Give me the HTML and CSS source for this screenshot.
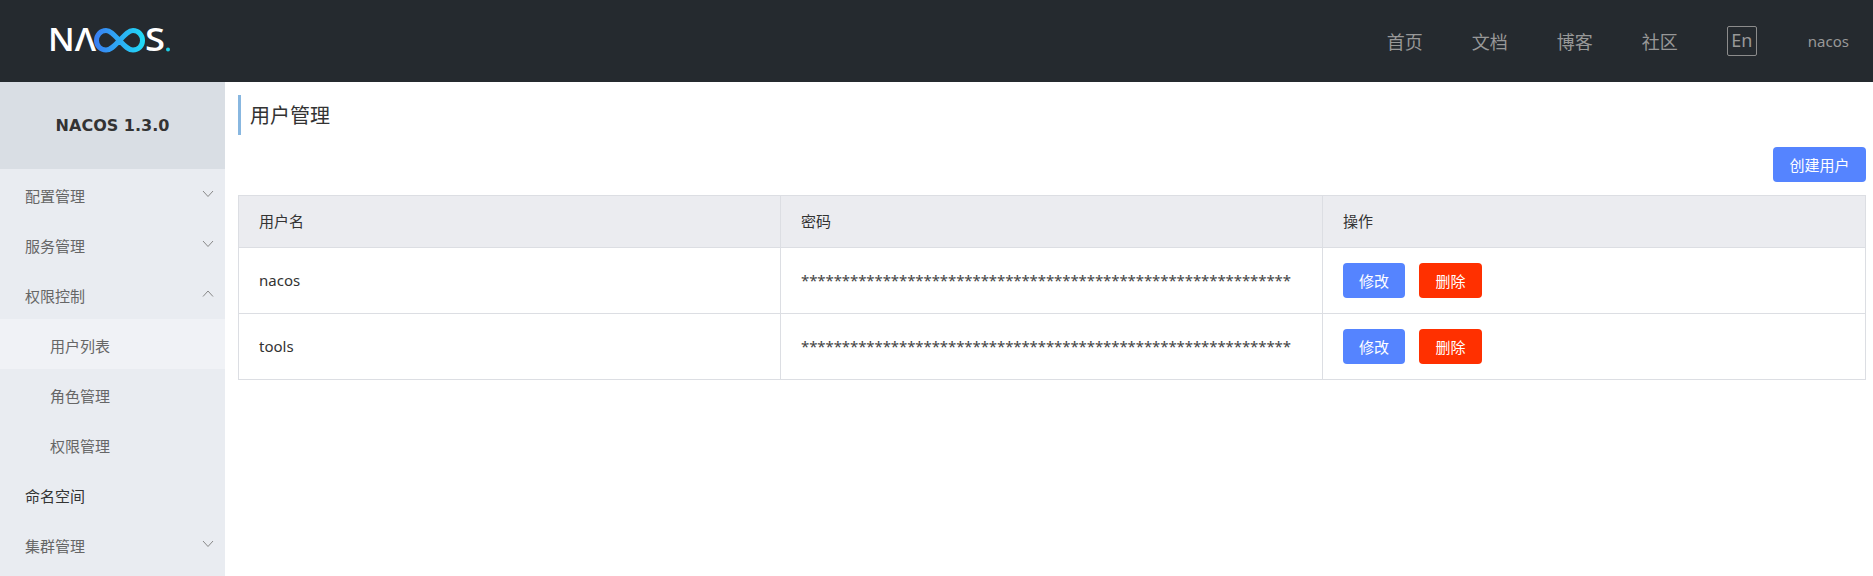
FILE: index.html
```html
<!DOCTYPE html>
<html lang="zh">
<head>
    <meta charset="UTF-8">
    <meta name="viewport" content="width=device-width, initial-scale=1.0">
    <title>Nacos - 用户管理</title>
    <link rel="stylesheet" href="styles.css">
</head>
<body>
    <header class="header">
        <svg class="logo" width="125" height="32" viewBox="0 0 125 32" role="img" aria-label="NACOS">
            <defs>
                <linearGradient id="loop" gradientUnits="userSpaceOnUse" x1="44" y1="0" x2="95" y2="0">
                    <stop offset="0" stop-color="#3b7cf2"/>
                    <stop offset="1" stop-color="#1fdcf6"/>
                </linearGradient>
            </defs>
            <text class="logo-text" x="-2" y="27" textLength="48" lengthAdjust="spacingAndGlyphs">NΛ</text>
            <path d="M69.5 16.500C63 9.500 60 6.500 56 6.500C50.500 6.500 46.500 11 46.500 16.500C46.500 22 50.500 26 56 26C60 26 63 23.500 69.500 16.500C76 9.500 79 6.500 83 6.500C88.500 6.500 92.500 11 92.500 16.500C92.500 22 88.500 26 83 26C79 26 76 23.500 69.500 16.500" fill="none" stroke="url(#loop)" stroke-width="5"/>
            <text class="logo-text" x="95" y="27" textLength="20" lengthAdjust="spacingAndGlyphs">S</text>
            <circle cx="118" cy="25.500" r="2" fill="#1fd0e8"/>
        </svg>
        <nav class="nav">
            <a class="nav-link">首页</a>
            <a class="nav-link">文档</a>
            <a class="nav-link">博客</a>
            <a class="nav-link">社区</a>
            <span class="lang">En</span>
            <span class="user">nacos</span>
        </nav>
    </header>

    <div class="main">
        <aside class="sidebar">
            <div class="version">NACOS 1.3.0</div>
            <ul class="menu">
                <li class="menu-item">配置管理
                    <svg class="chevron" width="12" height="8" viewBox="0 0 12 8"><path d="M1 1l5 5.500 5-5.500"/></svg>
                </li>
                <li class="menu-item">服务管理
                    <svg class="chevron" width="12" height="8" viewBox="0 0 12 8"><path d="M1 1l5 5.500 5-5.500"/></svg>
                </li>
                <li class="menu-item">权限控制
                    <svg class="chevron" width="12" height="8" viewBox="0 0 12 8"><path d="M1 6.500l5-5.500 5 5.500"/></svg>
                </li>
                <li class="menu-item sub active">用户列表</li>
                <li class="menu-item sub">角色管理</li>
                <li class="menu-item sub">权限管理</li>
                <li class="menu-item dark">命名空间</li>
                <li class="menu-item">集群管理
                    <svg class="chevron" width="12" height="8" viewBox="0 0 12 8"><path d="M1 1l5 5.500 5-5.500"/></svg>
                </li>
            </ul>
        </aside>

        <main class="content">
            <h1 class="page-title">用户管理</h1>
            <div class="toolbar">
                <button class="btn btn-primary btn-create">创建用户</button>
            </div>
            <table class="table">
                <thead>
                    <tr>
                        <th class="col">用户名</th>
                        <th class="col">密码</th>
                        <th>操作</th>
                    </tr>
                </thead>
                <tbody>
                    <tr>
                        <td class="text-cell">nacos</td>
                        <td class="text-cell password">************************************************************</td>
                        <td>
                            <button class="btn btn-primary">修改</button>
                            <button class="btn btn-danger">删除</button>
                        </td>
                    </tr>
                    <tr>
                        <td class="text-cell">tools</td>
                        <td class="text-cell password">************************************************************</td>
                        <td>
                            <button class="btn btn-primary">修改</button>
                            <button class="btn btn-danger">删除</button>
                        </td>
                    </tr>
                </tbody>
            </table>
        </main>
    </div>
</body>
</html>
```

FILE: styles.css
```css
* {
    margin: 0;
    padding: 0;
    box-sizing: border-box;
}

html, body {
    height: 100%;
    overflow: hidden;
}

body {
    font-family: "Noto Sans", "Noto Sans CJK SC", sans-serif;
    font-size: 15px;
    color: #333;
    background: #fff;
    display: flex;
    flex-direction: column;
}

.header {
    height: 82px;
    flex: none;
    background: #252a2f;
    display: flex;
    align-items: center;
    justify-content: space-between;
    padding: 0 24px 0 50px;
}

.logo {
    display: block;
    margin-top: -3px;
    overflow: visible;
}

.logo-text {
    font-family: "Open Sans", sans-serif;
    font-size: 32px;
    font-weight: 600;
    fill: #fff;
}

.nav {
    display: flex;
    align-items: center;
}

.nav-link {
    font-size: 18px;
    color: #989898;
    margin-right: 49px;
}

.lang {
    width: 30px;
    height: 30px;
    margin-right: 51px;
    border: 1px solid #8c8c8c;
    border-radius: 2px;
    color: #989898;
    font-size: 18px;
    line-height: 26px;
    text-align: center;
}

.user {
    color: #989898;
    font-size: 15px;
}

.main {
    flex: 1;
    display: flex;
    min-height: 0;
}

.sidebar {
    width: 225px;
    flex: none;
    background: #e9ecf1;
}

.version {
    height: 87px;
    background: #d9dee4;
    font-family: "DejaVu Sans", sans-serif;
    font-size: 16px;
    font-weight: 700;
    line-height: 87px;
    text-align: center;
    color: #333;
}

.menu {
    list-style: none;
}

.menu-item {
    height: 50px;
    line-height: 54px;
    padding-left: 25px;
    color: #666;
    position: relative;
}

.menu-item.sub {
    padding-left: 50px;
}

.menu-item.active {
    background: #f0f2f6;
}

.menu-item.dark {
    color: #333;
}

.chevron {
    position: absolute;
    right: 11px;
    top: 21px;
}

.chevron path {
    fill: none;
    stroke: #888;
    stroke-width: 1;
}

.content {
    flex: 1;
    min-width: 0;
    padding: 13px 7px 0 13px;
}

.page-title {
    height: 40px;
    border-left: 3px solid #88b7e0;
    padding-left: 9px;
    font-size: 20px;
    font-weight: 400;
    line-height: 42px;
    color: #333;
}

.toolbar {
    display: flex;
    justify-content: flex-end;
    margin-top: 12px;
    margin-bottom: 13px;
}

.btn {
    height: 35px;
    width: 62px;
    border: none;
    border-radius: 4px;
    color: #fff;
    font-family: inherit;
    font-size: 15px;
    vertical-align: middle;
}

.btn-create {
    width: 93px;
}

.btn-primary {
    background: #5584ff;
}

.btn-danger {
    background: #ff3000;
    width: 63px;
    margin-left: 10px;
}

.table {
    width: 100%;
    table-layout: fixed;
    border-collapse: collapse;
    border: 1px solid #dcdee3;
}

.table th.col {
    width: 542px;
}

.table th {
    height: 52px;
    padding: 0 20px 2px;
    background: #ebecf0;
    font-weight: 400;
    text-align: left;
    border: 1px solid #dcdee3;
}

.table td {
    height: 66px;
    padding: 0 20px;
    border: 1px solid #dcdee3;
    white-space: nowrap;
}

.table td.text-cell {
    padding-bottom: 2px;
}

.password {
    color: #444;
    letter-spacing: -0.1px;
    overflow: hidden;
}
```
